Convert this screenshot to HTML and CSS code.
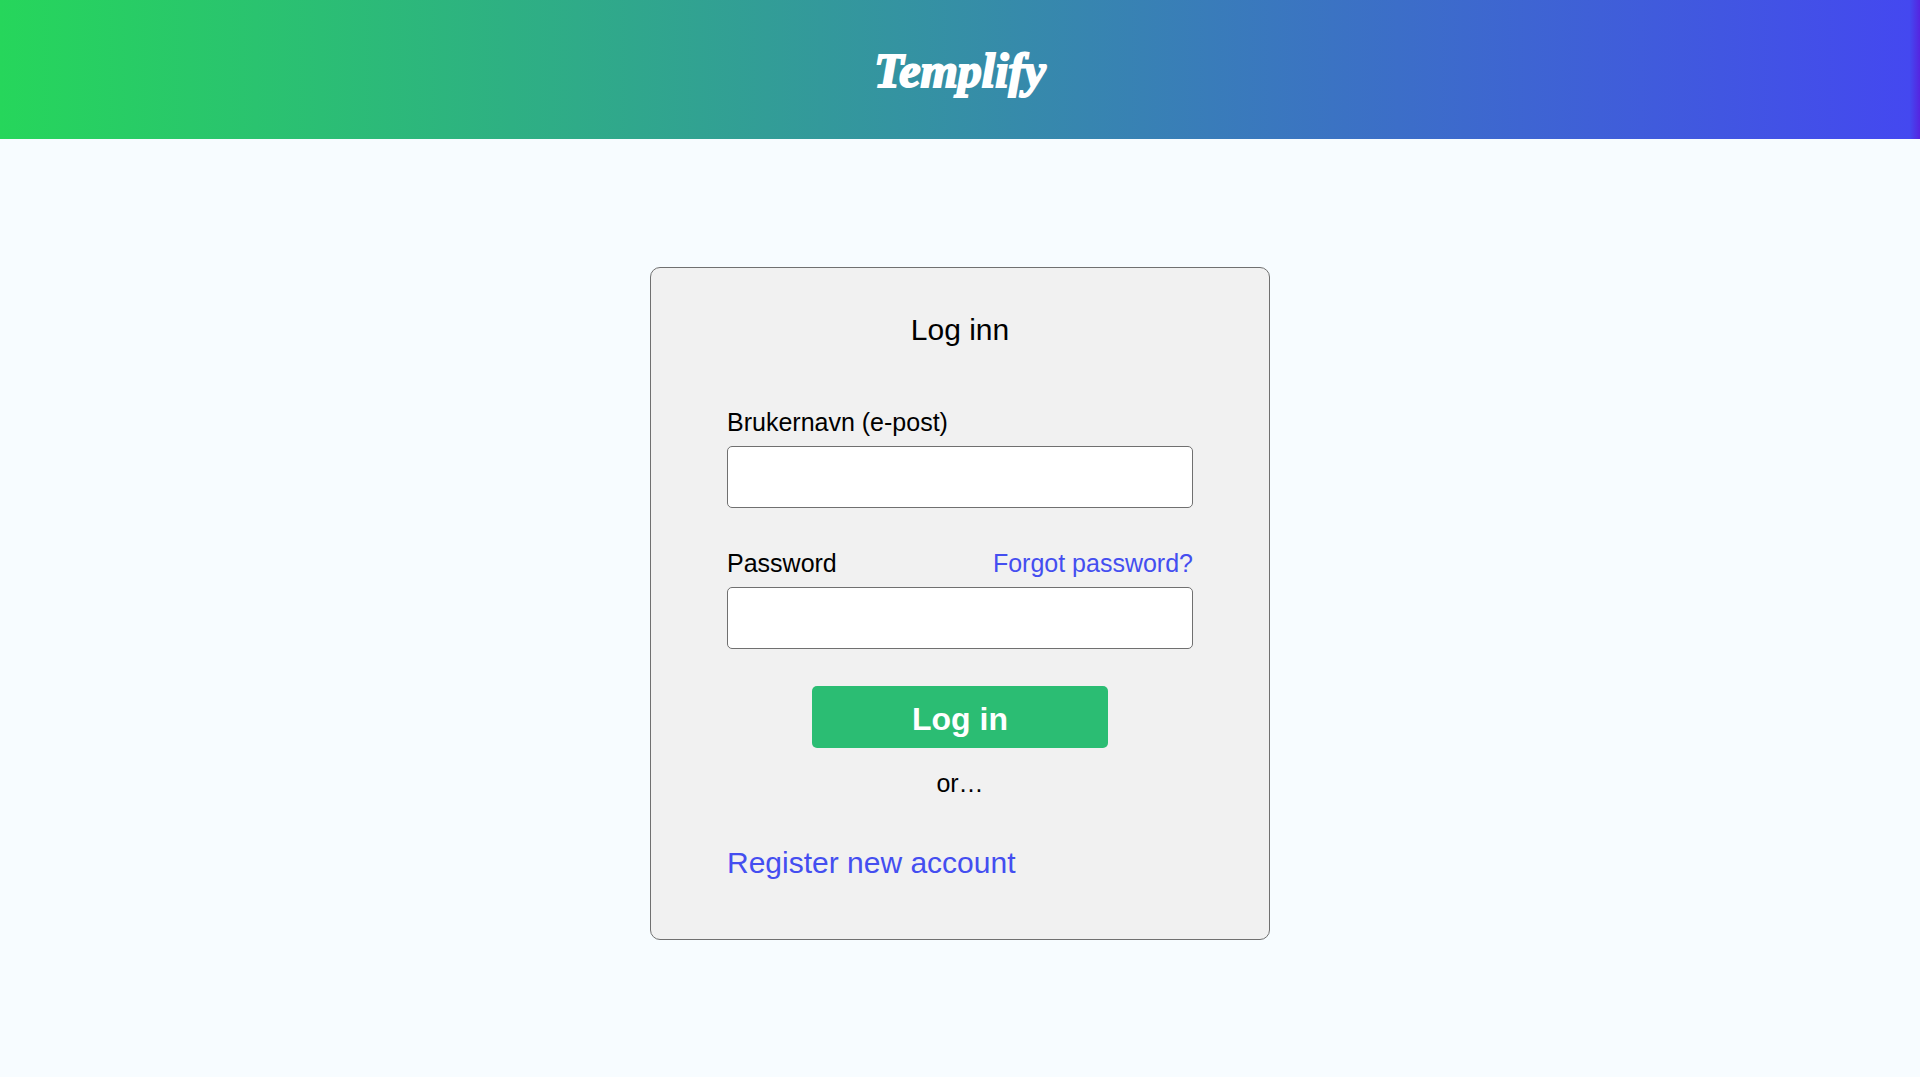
FILE: index.html
```html
<!DOCTYPE html>
<html lang="no">
<head>
<meta charset="utf-8">
<meta name="viewport" content="width=device-width, initial-scale=1">
<title>Templify</title>
<link rel="stylesheet" href="styles.css">
</head>
<body>
<header class="site-header">
  <a class="logo" href="#">Templify</a>
</header>
<main class="page">
  <form class="card">
    <h1 class="card-title">Log inn</h1>
    <div class="field">
      <label for="email">Brukernavn (e-post)</label>
      <input class="field-input" id="email" type="email" autocomplete="username">
    </div>
    <div class="field">
      <div class="field-head">
        <label for="password">Password</label>
        <a class="link" href="#">Forgot password?</a>
      </div>
      <input class="field-input" id="password" type="password" autocomplete="current-password">
    </div>
    <button class="submit" type="submit">Log in</button>
    <p class="or">or…</p>
    <a class="link register" href="#">Register new account</a>
  </form>
</main>
</body>
</html>
```
FILE: styles.css
```css
* {
  box-sizing: border-box;
}

body {
  margin: 0;
  min-height: 100vh;
  background: #f7fcff;
  color: #000;
  font: 25px/30px "Liberation Sans", Arial, sans-serif;
}

.site-header {
  display: flex;
  justify-content: center;
  padding: 41px 24px 38px;
  background: linear-gradient(90deg, #26d65b 0%, #4448f0 calc(100% - 10px), #5524e0 100%);
}

.logo {
  color: #fff;
  font: italic bold 48px/60px "Liberation Serif", "Times New Roman", serif;
  -webkit-text-stroke: 2px #fff;
  text-decoration: none;
}

.page {
  display: flex;
  justify-content: center;
  padding: 128px 24px;
}

.card {
  display: flex;
  flex-direction: column;
  width: 100%;
  max-width: 620px;
  padding: 44px 76px 58px;
  border: 1px solid #707070;
  border-radius: 10px;
  background: #f1f1f1;
}

.card-title {
  margin: 0 0 59px;
  font-size: 30px;
  font-weight: 400;
  line-height: 36px;
  text-align: center;
}

.field {
  display: flex;
  flex-direction: column;
  gap: 9px;
}

.field + .field {
  margin-top: 40px;
}

.field-head {
  display: flex;
  flex-wrap: wrap;
  justify-content: space-between;
}

.field-input {
  width: 100%;
  height: 62px;
  padding: 0 16px;
  border: 1px solid #707070;
  border-radius: 5px;
  background: #fff;
  font: inherit;
}

.link {
  color: #444ef0;
  text-decoration: none;
}

.submit {
  align-self: center;
  width: 296px;
  max-width: 100%;
  height: 62px;
  margin-top: 37px;
  padding: 4px 16px 0;
  border: 0;
  border-radius: 5px;
  background: #2bbd73;
  color: #fff;
  font: bold 32px/36px "Liberation Sans", Arial, sans-serif;
}

.or {
  margin: 20px 0 47px;
  text-align: center;
}

.register {
  align-self: flex-start;
  font-size: 30px;
  line-height: 36px;
}
```
